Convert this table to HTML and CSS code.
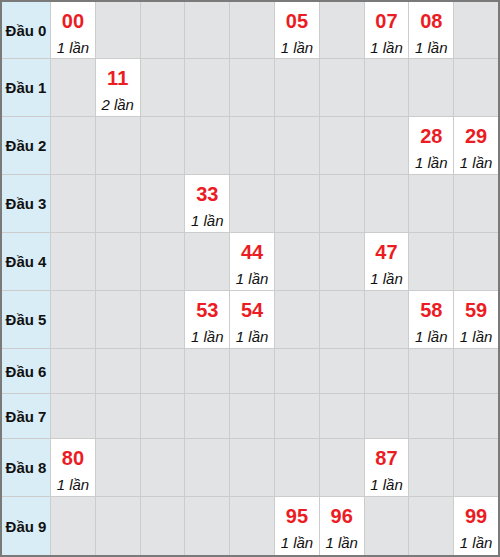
FILE: index.html
```html
<!DOCTYPE html>
<html lang="vi">
<head>
<meta charset="utf-8">
<link rel="stylesheet" href="styles.css">
</head>
<body>
<div class="board">
  <div class="head">Đầu 0</div>
  <div class="cell hit"><div class="num">00</div><div class="cnt">1 lần</div></div>
  <div class="cell"></div><div class="cell"></div><div class="cell"></div><div class="cell"></div>
  <div class="cell hit"><div class="num">05</div><div class="cnt">1 lần</div></div>
  <div class="cell"></div>
  <div class="cell hit"><div class="num">07</div><div class="cnt">1 lần</div></div>
  <div class="cell hit"><div class="num">08</div><div class="cnt">1 lần</div></div>
  <div class="cell"></div>

  <div class="head">Đầu 1</div>
  <div class="cell"></div>
  <div class="cell hit"><div class="num">11</div><div class="cnt">2 lần</div></div>
  <div class="cell"></div><div class="cell"></div><div class="cell"></div><div class="cell"></div><div class="cell"></div><div class="cell"></div><div class="cell"></div><div class="cell"></div>

  <div class="head">Đầu 2</div>
  <div class="cell"></div><div class="cell"></div><div class="cell"></div><div class="cell"></div><div class="cell"></div><div class="cell"></div><div class="cell"></div><div class="cell"></div>
  <div class="cell hit"><div class="num">28</div><div class="cnt">1 lần</div></div>
  <div class="cell hit"><div class="num">29</div><div class="cnt">1 lần</div></div>

  <div class="head">Đầu 3</div>
  <div class="cell"></div><div class="cell"></div><div class="cell"></div>
  <div class="cell hit"><div class="num">33</div><div class="cnt">1 lần</div></div>
  <div class="cell"></div><div class="cell"></div><div class="cell"></div><div class="cell"></div><div class="cell"></div><div class="cell"></div>

  <div class="head">Đầu 4</div>
  <div class="cell"></div><div class="cell"></div><div class="cell"></div><div class="cell"></div>
  <div class="cell hit"><div class="num">44</div><div class="cnt">1 lần</div></div>
  <div class="cell"></div><div class="cell"></div>
  <div class="cell hit"><div class="num">47</div><div class="cnt">1 lần</div></div>
  <div class="cell"></div><div class="cell"></div>

  <div class="head">Đầu 5</div>
  <div class="cell"></div><div class="cell"></div><div class="cell"></div>
  <div class="cell hit"><div class="num">53</div><div class="cnt">1 lần</div></div>
  <div class="cell hit"><div class="num">54</div><div class="cnt">1 lần</div></div>
  <div class="cell"></div><div class="cell"></div><div class="cell"></div>
  <div class="cell hit"><div class="num">58</div><div class="cnt">1 lần</div></div>
  <div class="cell hit"><div class="num">59</div><div class="cnt">1 lần</div></div>

  <div class="head">Đầu 6</div>
  <div class="cell"></div><div class="cell"></div><div class="cell"></div><div class="cell"></div><div class="cell"></div><div class="cell"></div><div class="cell"></div><div class="cell"></div><div class="cell"></div><div class="cell"></div>

  <div class="head">Đầu 7</div>
  <div class="cell"></div><div class="cell"></div><div class="cell"></div><div class="cell"></div><div class="cell"></div><div class="cell"></div><div class="cell"></div><div class="cell"></div><div class="cell"></div><div class="cell"></div>

  <div class="head">Đầu 8</div>
  <div class="cell hit"><div class="num">80</div><div class="cnt">1 lần</div></div>
  <div class="cell"></div><div class="cell"></div><div class="cell"></div><div class="cell"></div><div class="cell"></div><div class="cell"></div>
  <div class="cell hit"><div class="num">87</div><div class="cnt">1 lần</div></div>
  <div class="cell"></div><div class="cell"></div>

  <div class="head">Đầu 9</div>
  <div class="cell"></div><div class="cell"></div><div class="cell"></div><div class="cell"></div><div class="cell"></div>
  <div class="cell hit"><div class="num">95</div><div class="cnt">1 lần</div></div>
  <div class="cell hit"><div class="num">96</div><div class="cnt">1 lần</div></div>
  <div class="cell"></div><div class="cell"></div>
  <div class="cell hit"><div class="num">99</div><div class="cnt">1 lần</div></div>
</div>
</body>
</html>
```
FILE: styles.css
```css
html, body {
  margin: 0;
  padding: 0;
  background: #ffffff;
}
.board {
  box-sizing: border-box;
  width: 500px;
  height: 557px;
  border: 2px solid #7a7a7a;
  background: #cccccc;
  display: grid;
  grid-template-columns: 48px repeat(10, 1fr);
  grid-template-rows: 56px 57px 57px 57px 57px 57px 44px 44px 57px 58px;
  gap: 1px;
  font-family: "Liberation Sans", Arial, sans-serif;
}
.head {
  background: #d9edf7;
  display: flex;
  align-items: center;
  justify-content: center;
  font-weight: bold;
  font-size: 15px;
  color: #111;
}
.cell {
  background: #e2e3e5;
  text-align: center;
}
.cell.hit {
  background: #ffffff;
}
.num {
  padding-top: 7px;
  font-size: 20px;
  line-height: 24px;
  font-weight: bold;
  color: #ec1c24;
}
.cnt {
  margin-top: 6px;
  font-size: 15px;
  line-height: 18px;
  font-style: italic;
  color: #111;
}
```
